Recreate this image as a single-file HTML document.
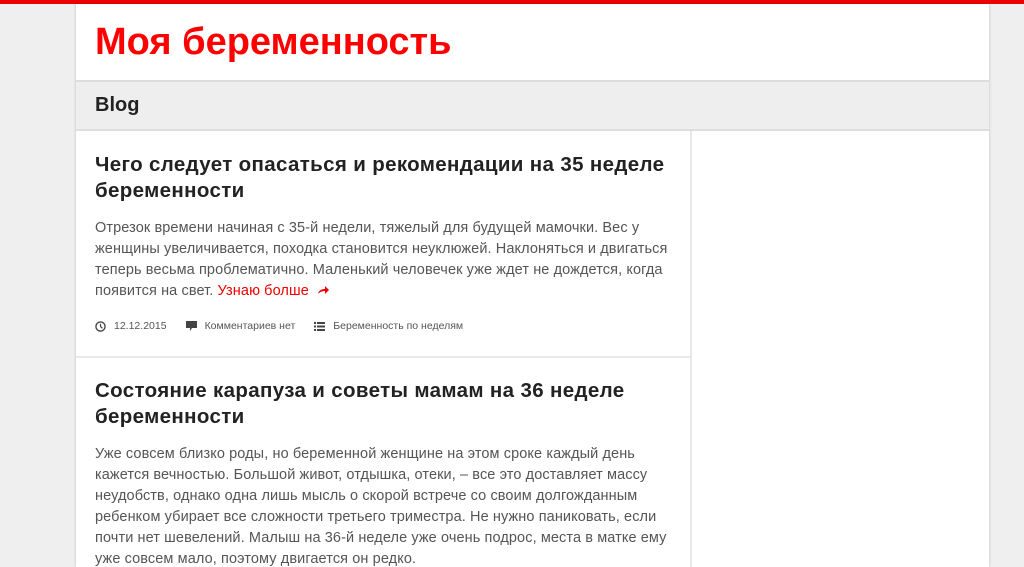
<!DOCTYPE html>
<html><head><meta charset="utf-8"><style>
*{margin:0;padding:0;box-sizing:border-box}
html,body{width:1024px;height:567px;overflow:hidden}
body{background:#efefef;font-family:"Liberation Sans","DejaVu Sans",sans-serif;position:relative}
.top{position:absolute;left:0;top:0;width:1024px;height:4px;background:#e00}
.wrap{position:absolute;left:76px;top:4px;width:913px;height:563px;background:#fff;box-shadow:0 0 3px rgba(0,0,0,.2)}
.logo{position:absolute;left:19px;top:17px;font-size:38px;font-weight:bold;color:#f00;letter-spacing:0}
.bar{position:absolute;left:0;top:76px;width:913px;height:51px;background:#eee;border-top:2px solid #ddd;border-bottom:2px solid #ddd}
.bar span{position:absolute;left:19px;top:12px;font-size:20px;font-weight:bold;color:#222}
.side{position:absolute;left:614px;top:127px;width:2px;height:440px;background:#e8e8e8}
.post{position:absolute;left:19px;width:590px;white-space:nowrap}
h2{font-size:20.5px;line-height:26px;color:#222;font-weight:bold;letter-spacing:.35px}
p{font-size:14.5px;line-height:21px;color:#555;margin-top:14px;letter-spacing:.1px}
a{color:#e00;text-decoration:none}
.meta{position:absolute;top:316px;left:19px;font-size:10.5px;color:#555;display:flex;align-items:center;white-space:nowrap}
.meta svg{margin-right:8px}
.meta span{margin-right:19px}
.hr{position:absolute;left:0;top:352px;width:614px;height:2px;background:#e8e8e8}
</style></head><body>
<div class="top"></div>
<div class="wrap">
<div class="logo">Моя беременность</div>
<div class="bar"><span>Blog</span></div>
<div class="side"></div>
<div class="post" style="top:148px">
<h2>Чего следует опасаться и рекомендации на 35 неделе<br>беременности</h2>
<p>Отрезок времени начиная с 35-й недели, тяжелый для будущей мамочки. Вес у<br>женщины увеличивается, походка становится неуклюжей. Наклоняться и двигаться<br>теперь весьма проблематично. Маленький человечек уже ждет не дождется, когда<br>появится на свет. <a>Узнаю болше</a> &nbsp;<svg width="12" height="10" viewBox="0 0 12 10"><path d="M1 9C2 5 5 4 8 4V1l4 4-4 4V6C5 6 3 7 1 9z" fill="#e00"/></svg></p>
</div>
<div class="meta">
<svg width="11" height="11" viewBox="0 0 12 12"><circle cx="6" cy="6" r="5" fill="none" stroke="#444" stroke-width="1.5"/><path d="M6 3v3l2 2" fill="none" stroke="#444" stroke-width="1.3"/></svg><span>12.12.2015</span>
<svg width="11" height="10" viewBox="0 0 11 10"><path d="M0 0h11v7H6l-2 3V7H0z" fill="#444"/></svg><span>Комментариев нет</span>
<svg width="11" height="9" viewBox="0 0 11 9"><path d="M0 0h2v2H0zM3 0h8v2H3zM0 3.5h2v2H0zM3 3.5h8v2H3zM0 7h2v2H0zM3 7h8v2H3z" fill="#444"/></svg><span>Беременность по неделям</span>
</div>
<div class="hr"></div>
<div class="post" style="top:374px">
<h2>Состояние карапуза и советы мамам на 36 неделе<br>беременности</h2>
<p>Уже совсем близко роды, но беременной женщине на этом сроке каждый день<br>кажется вечностью. Большой живот, отдышка, отеки, – все это доставляет массу<br>неудобств, однако одна лишь мысль о скорой встрече со своим долгожданным<br>ребенком убирает все сложности третьего триместра. Не нужно паниковать, если<br>почти нет шевелений. Малыш на 36-й неделе уже очень подрос, места в матке ему<br>уже совсем мало, поэтому двигается он редко.</p>
</div>
</div>
</body></html>
